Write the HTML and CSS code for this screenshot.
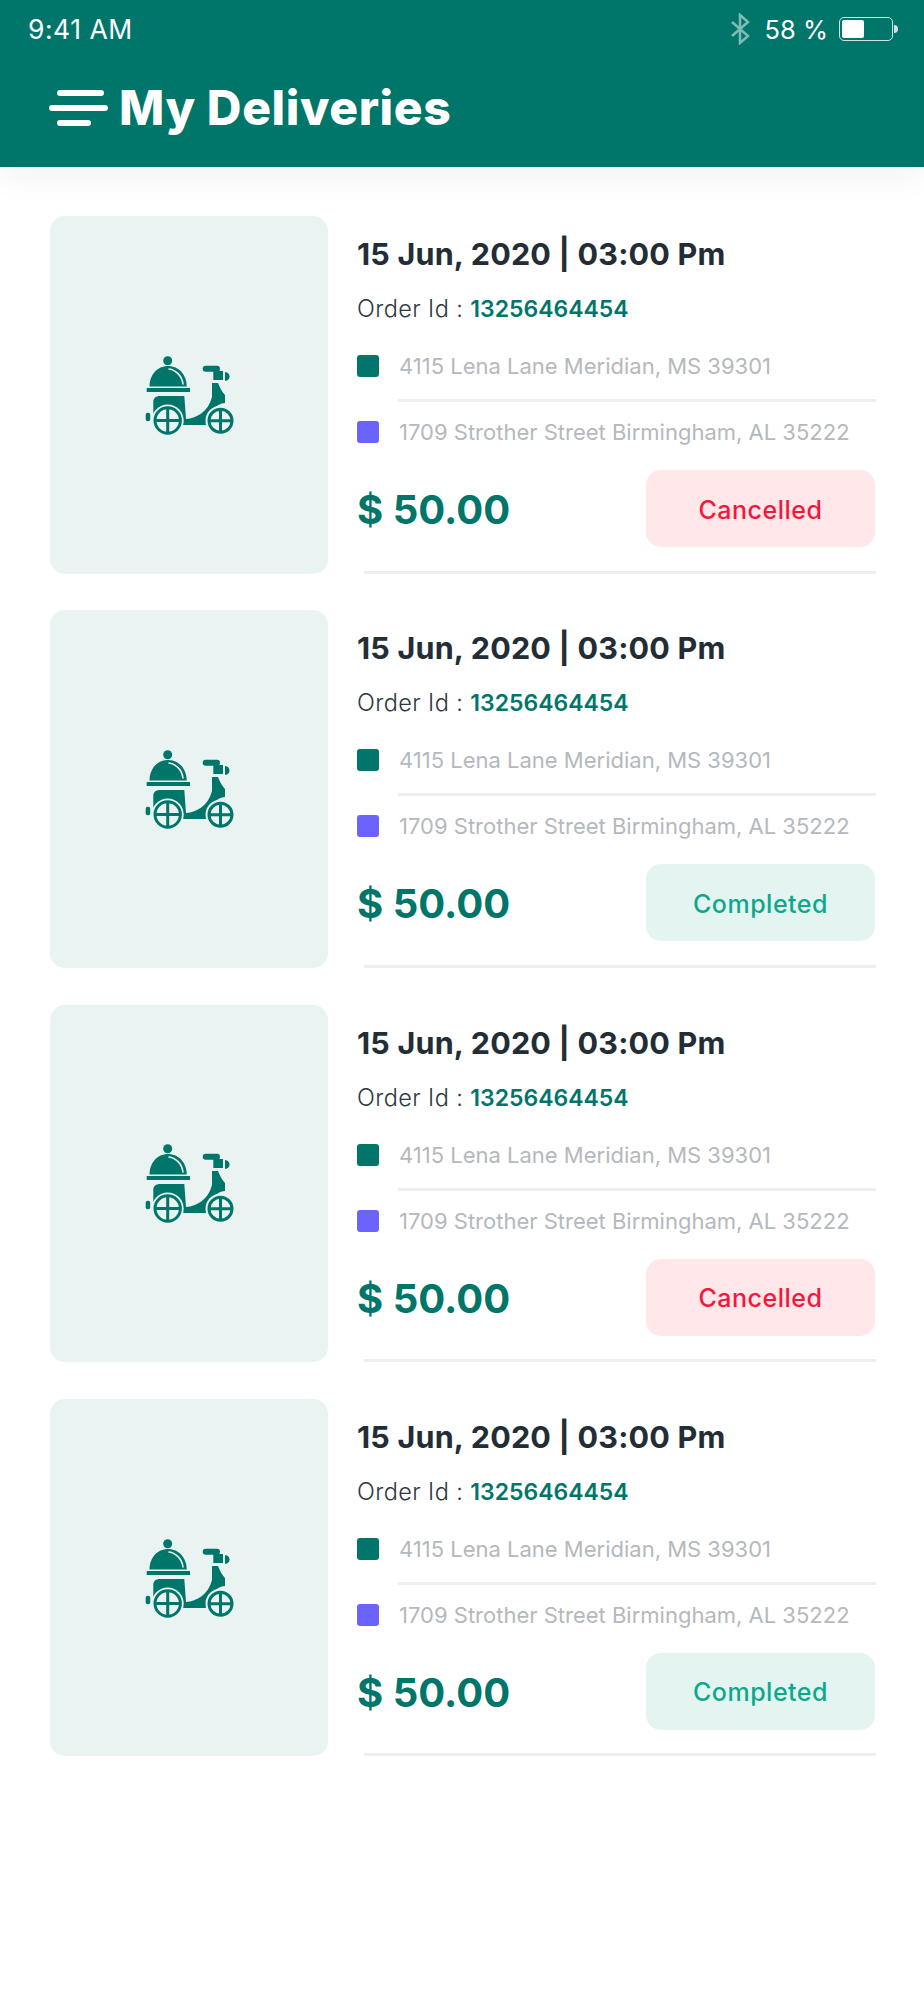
FILE: index.html

```html
<!DOCTYPE html>
<html lang="en">
<head>
  <meta charset="UTF-8" />
  <title>My Deliveries</title>
  <meta name="viewport" content="width=device-width, initial-scale=1" />
  <link rel="stylesheet" href="styles.css">
</head>
<body>
  <svg class="defs" width="0" height="0">
    <symbol id="scooter" viewBox="4 0 130 110">
      <circle cx="47.700" cy="20.700" r="4.500" />
      <path d="M29.500 46.500 C29.500 35 37 26 48 26 C59 26 66.700 35 66.700 46.500 Z" />
      <path class="shine" d="M49 29 C56 30 62 36 63 44" />
      <rect x="26.700" y="48" width="43.300" height="4" />
      <path d="M33.300 80 V62 C33.300 58 36 56 40 56 H64.300 L66 79 C77 78 88 72 92 57 V43 H98 C100 48 102 52 105 55 V63 C96 64 90 70 88 85 H60 V80 Z" />
      <rect x="25.700" y="72.700" width="4.500" height="8.500" rx="2" />
      <rect x="82.700" y="25.700" width="17.300" height="6" rx="3" />
      <path d="M93.300 31 H103 V40 H93.300 Z" />
      <path d="M105 32 C111 32 111 41 105 41 Z" />
      <circle class="halo" cx="47.700" cy="80.500" r="16" />
      <g class="wheel">
        <circle cx="47.700" cy="80.500" r="12.700" />
        <path d="M47.700 68 V93 M35 80.500 H60.400" />
      </g>
      <circle class="halo" cx="100.500" cy="80.700" r="15" />
      <g class="wheel">
        <circle cx="100.500" cy="80.700" r="11.500" />
        <path d="M100.500 69 V92 M89 80.700 H112" />
      </g>
    </symbol>
  </svg>

  <header class="topbar">
    <div class="status">
      <span class="clock">9:41 AM</span>
      <div class="status-right">
        <svg class="bt" width="20" height="32" viewBox="0 0 20 32">
          <path d="M2 9 L18 23 L10 30 V2 L18 9 L2 23" />
        </svg>
        <span>58 %</span>
        <div class="battery"><div class="battery-fill"></div></div>
        <div class="battery-tip"></div>
      </div>
    </div>
    <div class="title-row">
      <div class="menu"><i class="m1"></i><i class="m2"></i><i class="m3"></i></div>
      <h1>My Deliveries</h1>
    </div>
  </header>

  <main class="list">
    <article class="card">
      <div class="thumb"><svg width="130" height="110"><use href="#scooter" /></svg></div>
      <div class="info">
        <h2>15 Jun, 2020 | 03:00 Pm</h2>
        <p class="order">Order Id : <b>13256464454</b></p>
        <div class="addr"><i class="dot green"></i><span>4115 Lena Lane Meridian, MS 39301</span></div>
        <div class="addr second"><i class="dot blue"></i><span>1709 Strother Street Birmingham, AL 35222</span></div>
        <div class="bottom">
          <span class="price">$ 50.00</span>
          <span class="badge cancelled">Cancelled</span>
        </div>
      </div>
    </article>

    <article class="card">
      <div class="thumb"><svg width="130" height="110"><use href="#scooter" /></svg></div>
      <div class="info">
        <h2>15 Jun, 2020 | 03:00 Pm</h2>
        <p class="order">Order Id : <b>13256464454</b></p>
        <div class="addr"><i class="dot green"></i><span>4115 Lena Lane Meridian, MS 39301</span></div>
        <div class="addr second"><i class="dot blue"></i><span>1709 Strother Street Birmingham, AL 35222</span></div>
        <div class="bottom">
          <span class="price">$ 50.00</span>
          <span class="badge completed">Completed</span>
        </div>
      </div>
    </article>

    <article class="card">
      <div class="thumb"><svg width="130" height="110"><use href="#scooter" /></svg></div>
      <div class="info">
        <h2>15 Jun, 2020 | 03:00 Pm</h2>
        <p class="order">Order Id : <b>13256464454</b></p>
        <div class="addr"><i class="dot green"></i><span>4115 Lena Lane Meridian, MS 39301</span></div>
        <div class="addr second"><i class="dot blue"></i><span>1709 Strother Street Birmingham, AL 35222</span></div>
        <div class="bottom">
          <span class="price">$ 50.00</span>
          <span class="badge cancelled">Cancelled</span>
        </div>
      </div>
    </article>

    <article class="card">
      <div class="thumb"><svg width="130" height="110"><use href="#scooter" /></svg></div>
      <div class="info">
        <h2>15 Jun, 2020 | 03:00 Pm</h2>
        <p class="order">Order Id : <b>13256464454</b></p>
        <div class="addr"><i class="dot green"></i><span>4115 Lena Lane Meridian, MS 39301</span></div>
        <div class="addr second"><i class="dot blue"></i><span>1709 Strother Street Birmingham, AL 35222</span></div>
        <div class="bottom">
          <span class="price">$ 50.00</span>
          <span class="badge completed">Completed</span>
        </div>
      </div>
    </article>
  </main>
</body>
</html>
```

FILE: styles.css

```css
* { box-sizing: border-box; }
body { margin: 0; background: white; font-family: Inter, sans-serif; color: #222d36; }
.defs { display: block; height: 0; }
symbol { fill: #00766a; }
.shine { fill: none; stroke: #edf4f3; stroke-width: 1.500; stroke-linecap: round; }
.halo { fill: #e9f3f1; }
.wheel { fill: #e9f3f1; stroke: #00766a; stroke-width: 3; }

.topbar { height: 167px; background: #00766a; color: white; box-shadow: 0 10px 30px rgba(0,0,0,0.05); padding: 13px 26px 0 28px; }
.status { display: flex; justify-content: space-between; align-items: center; height: 32px; font-size: 25.500px; }
.clock { font-size: 26.500px; letter-spacing: 0.500px; }
.status-right { display: flex; align-items: center; }
.bt { fill: none; stroke: rgba(255,255,255,0.5); stroke-width: 2.500; margin-right: 15px; }
.battery { width: 54px; height: 24px; margin-left: 11px; border: 1.500px solid #cfe4e1; border-radius: 5px; padding: 2px; }
.battery-fill { width: 22px; height: 100%; background: white; border-radius: 2px; }
.battery-tip { width: 4px; height: 8px; background: #cfe4e1; border-radius: 0 4px 4px 0; margin-left: 1px; }

.title-row { display: flex; align-items: center; margin: 36px 0 0 21px; }
.menu { width: 59px; height: 37px; margin-right: 11px; }
.menu i { display: block; height: 6px; background: white; border-radius: 3px; margin-bottom: 9px; }
.m1 { width: 47px; margin-left: 8px; }
.m2 { width: 59px; }
.m3 { width: 34px; margin-left: 8px; }
h1 { margin: 0; font-size: 48px; font-weight: 800; line-height: 54px; letter-spacing: 0.600px; }

.list { padding: 49px 48px 0 50px; }
.card { display: flex; height: 357.500px; margin-bottom: 36.830px; }
.thumb { width: 278px; flex: none; background: #e9f3f1; border-radius: 15px; display: flex; align-items: center; justify-content: center; }
.info { flex: 1; margin-left: 29px; position: relative; }
.info::after { content: ""; position: absolute; left: 7px; right: 0; bottom: 0; height: 3px; background: #eeeeee; }
h2 { margin: 19px 0 0; font-size: 30.500px; font-weight: 700; line-height: 38px; letter-spacing: 0.200px; }
.order { margin: 20px 0 0; font-size: 23.500px; font-weight: 300; line-height: 32px; letter-spacing: 0.400px; color: #2e3840; }
.order b { color: #00766a; font-weight: 600; font-size: 23px; letter-spacing: 0; }
.addr { display: flex; align-items: center; font-size: 22px; color: #b4b9bd; height: 32px; margin-top: 25px; }
.addr.second { margin-top: 34px; position: relative; }
.addr.second::before { content: ""; position: absolute; left: 41px; right: 0; top: -17px; height: 3px; background: #eeeeee; }
.dot { width: 22px; height: 22px; border-radius: 3px; margin-right: 20px; flex: none; }
.green { background: #00766a; }
.blue { background: #6c63ff; }
.bottom { display: flex; justify-content: space-between; align-items: center; margin-top: 22px; }
.price { font-size: 40px; font-weight: 700; color: #00766a; padding-top: 2px; }
.badge { width: 229px; height: 77px; margin-right: 1px; padding-top: 2px; border-radius: 15px; display: flex; align-items: center; justify-content: center; font-size: 25px; font-weight: 500; letter-spacing: 0.500px; }
.cancelled { background: #ffe7ea; color: #f5163c; }
.completed { background: #e4f5f1; color: #0ca88c; }
```
